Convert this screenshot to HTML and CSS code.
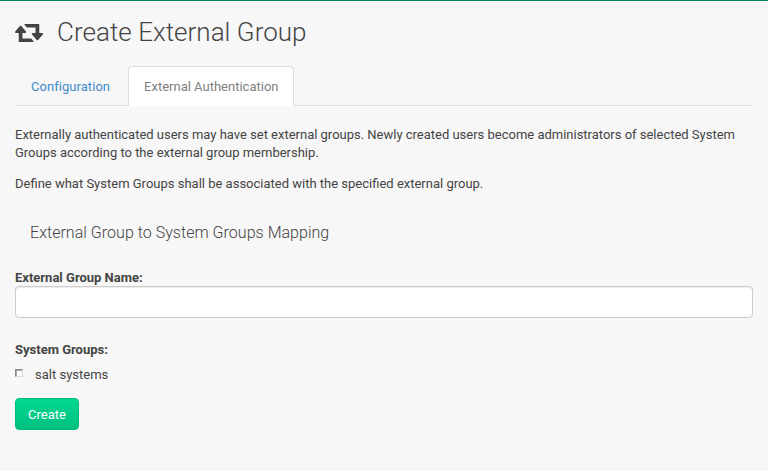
FILE: index.html
```html
<!DOCTYPE html>
<html lang="en">
<head>
<meta charset="utf-8">
<title>Create External Group</title>
<link rel="stylesheet" href="styles.css">
</head>
<body>
<main class="page">
  <h1 class="title">
    <svg class="title-icon" viewBox="0 0 1920 1280" preserveAspectRatio="none" aria-hidden="true"><path d="M1280 1248q0 13-9.500 22.500t-22.500 9.500h-960q-8 0-13.500-2t-9-7-5.500-8-3-11.500-1-11.500v-600h-192q-26 0-45-19t-19-45q0-24 15-41l320-384q19-22 49-22t49 22l320 384q15 17 15 41 0 26-19 45t-45 19h-192v384h576q16 0 25 11l160 192q7 10 7 21zM1920 704q0 24-15 41l-320 384q-20 23-49 23t-49-23l-320-384q-15-17-15-41 0-26 19-45t45-19h192v-384h-576q-16 0-25-12l-160-192q-7-9-7-20 0-13 9.500-22.500t22.500-9.500h960q8 0 13.500 2t9 7 5.500 8 3 11.500 1 11.500v600h192q26 0 45 19t19 45z"/></svg>
    <span>Create External Group</span>
  </h1>
  <nav class="tabs">
    <a class="tab" href="#">Configuration</a>
    <a class="tab active" href="#">External Authentication</a>
  </nav>
  <p class="intro">Externally authenticated users may have set external groups. Newly created users become administrators of selected System Groups according to the external group membership.</p>
  <p class="define">Define what System Groups shall be associated with the specified external group.</p>
  <h2 class="subtitle">External Group to System Groups Mapping</h2>
  <form>
    <label class="label" for="name">External Group Name:</label>
    <input class="field" id="name" type="text">
    <div class="label groups">System Groups:</div>
    <label class="option"><input class="check" type="checkbox"><span>salt systems</span></label>
    <button class="button" type="button">Create</button>
  </form>
</main>
</body>
</html>
```
FILE: styles.css
```css
* { box-sizing: border-box; }
body { margin: 0; background: #f7f7f7; color: #444; font: 13px/18px Roboto, sans-serif; }
.page { border-top: 1px solid #00895e; padding: 0 15px; height: 471px; }
.title { display: flex; align-items: flex-start; gap: 14px; margin: 0; padding-top: 16px; height: 47px; font-size: 26px; line-height: 30px; font-weight: 300; letter-spacing: .03px; }
.title-icon { width: 28px; height: 18px; margin-top: 7px; fill: #444; }
.tabs { display: flex; gap: 2px; margin-top: 18px; height: 40px; border-bottom: 1px solid #ddd; }
.tab { height: 40px; padding: 11px 15px; border: 1px solid transparent; border-radius: 4px 4px 0 0; color: #428bca; text-decoration: none; letter-spacing: .05px; }
.tab.active { background: #fff; border-color: #ddd; border-bottom-color: #fff; color: #808080; letter-spacing: 0; }
.intro { margin: 20px 0 13px; letter-spacing: -.008px; }
.define { margin: 0; }
.subtitle { margin: 30px 15px 0; font-size: 16px; line-height: 20px; font-weight: 300; letter-spacing: .03px; }
.label { display: block; height: 17px; margin-top: 26px; font-weight: 700; }
.field { display: block; width: 100%; height: 32px; border: 1px solid #ccc; border-radius: 4px; background: #fff; box-shadow: inset 0 1px 1px rgba(0,0,0,.075); }
.groups { height: 18px; margin-top: 23px; }
.option { display: flex; margin-top: 7px; }
.check { appearance: none; width: 8px; height: 8px; margin: 3px 12px 0 0; background: #fff; border: 1px solid #dadada; border-top-color: #888; border-left-color: #888; box-shadow: inset 1px 1px 0 #aaa; }
.button { display: block; width: 64px; height: 32px; margin-top: 14px; padding: 1px 0 0; border: 1px solid #00b97e; border-radius: 4px; background: linear-gradient(#00d890, #00c081); color: #fff; font: 13px/18px Roboto, sans-serif; }
```
